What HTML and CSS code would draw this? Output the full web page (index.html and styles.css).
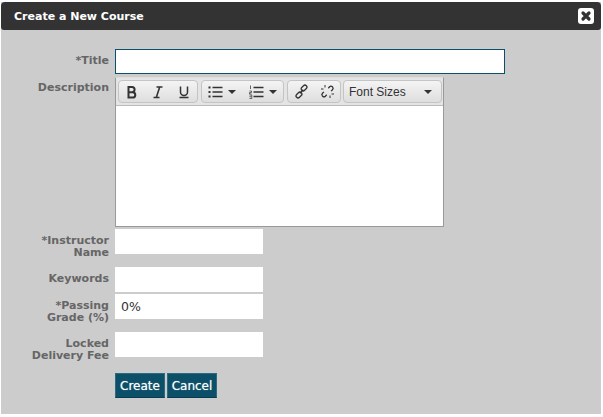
FILE: index.html
```html
<!DOCTYPE html>
<html lang="en">
<head>
<meta charset="utf-8">
<title>Create a New Course</title>
<link rel="stylesheet" href="styles.css">
</head>
<body>
<div class="dialog">
  <header class="titlebar">
    <span class="title">Create a New Course</span>
    <button class="close" aria-label="Close">
      <svg width="16" height="16" viewBox="0 0 16 16"><rect width="16" height="16" rx="3" fill="#fff"/><path d="M5 5l6 6M11 5l-6 6" stroke="#333" stroke-width="3.200" stroke-linecap="round"/></svg>
    </button>
  </header>
  <form class="form">
    <div class="row row-title">
      <label class="label">*Title</label>
      <input class="input input-wide" type="text">
    </div>
    <div class="row row-desc">
      <label class="label label-desc">Description</label>
      <div class="editor">
        <div class="toolbar">
          <div class="group">
            <span class="tool"><svg width="12" height="14" viewBox="0 0 12 14"><path d="M2.500 2h3.500a2.600 2.600 0 0 1 0 5.200h-3.500zM2.500 7.200h4.100a2.700 2.700 0 0 1 0 5.400h-4.100z" fill="none" stroke="#333" stroke-width="2"/></svg></span>
            <span class="tool"><svg width="12" height="14" viewBox="0 0 12 14"><path d="M4.500 2h6M1.500 12.500h6M7.700 2L4.300 12.500" fill="none" stroke="#333" stroke-width="1.600"/></svg></span>
            <span class="tool"><svg width="12" height="14" viewBox="0 0 12 14"><path d="M2.500 1.500v5.500a3.500 3.500 0 0 0 7 0V1.500M1.500 12.500h9" fill="none" stroke="#333" stroke-width="1.500"/></svg></span>
          </div>
          <div class="group">
            <span class="tool tool-list"><svg width="15" height="14" viewBox="0 0 15 14"><path d="M4.500 2.500h10M4.500 7h10M4.500 11.500h10" stroke="#333" stroke-width="1.400"/><path d="M0.500 2.500h2M0.500 7h2M0.500 11.500h2" stroke="#333" stroke-width="2"/></svg><i class="caret"></i></span>
            <span class="tool tool-list"><svg width="15" height="14" viewBox="0 0 15 14"><path d="M4.500 2.500h10M4.500 7h10M4.500 11.500h10" stroke="#333" stroke-width="1.400"/><path d="M1.500 0.500v3.500M0.500 6h2v1.500h-2v1.500h2M0.500 10h2.300v3.500h-2.300M0.500 11.700h2" fill="none" stroke="#444" stroke-width="0.800"/></svg><i class="caret"></i></span>
          </div>
          <div class="group">
            <span class="tool"><svg width="15" height="15" viewBox="0 0 15 15"><g fill="none" stroke="#333" stroke-width="1.300"><rect x="6.800" y="2" width="6.500" height="4" rx="2" transform="rotate(-45 10 4)"/><rect x="1.700" y="9" width="6.500" height="4" rx="2" transform="rotate(-45 5 11)"/><path d="M5.800 9.200l3.400-3.400"/></g></svg></span>
            <span class="tool"><svg width="15" height="15" viewBox="0 0 15 15"><g fill="none" stroke="#333" stroke-width="1.300"><path d="M8.300 4.200l1.300-1.400a2 2 0 0 1 2.800 0l0.100 0.100a2 2 0 0 1 0 2.800l-1.400 1.400"/><path d="M6.700 10.800l-1.300 1.400a2 2 0 0 1-2.800 0l-0.100-0.100a2 2 0 0 1 0-2.800l1.400-1.400"/></g><path d="M5 1v2.500M1 5h2.500M10 11.500v2.500M11.500 10h2.500" stroke="#333" stroke-width="1"/></svg></span>
          </div>
          <div class="group group-select">
            <span class="select">Font Sizes</span><i class="caret"></i>
          </div>
        </div>
        <div class="editarea"></div>
      </div>
    </div>
    <div class="row row-two">
      <label class="label">*Instructor Name</label>
      <input class="input" type="text">
    </div>
    <div class="row row-one">
      <label class="label">Keywords</label>
      <input class="input" type="text">
    </div>
    <div class="row row-two">
      <label class="label">*Passing Grade (%)</label>
      <input class="input" type="text" value="0%">
    </div>
    <div class="row row-last">
      <label class="label">Locked Delivery Fee</label>
      <input class="input" type="text">
    </div>
    <div class="actions">
      <button class="btn" type="button">Create</button>
      <button class="btn" type="button">Cancel</button>
    </div>
  </form>
</div>
</body>
</html>
```

FILE: styles.css
```css
* { box-sizing: border-box; }
html, body { margin: 0; background: #fff; }
body { padding: 2px 2px 3px 1px; height: 417px; overflow: hidden; }
.dialog {
  width: 600px;
  height: 412px;
  background: #cccccc;
  font-family: "DejaVu Sans", sans-serif;
}
.titlebar {
  height: 28px;
  background: #333333;
  border-radius: 4px 4px 3px 3px;
  display: flex;
  align-items: center;
  justify-content: space-between;
  padding: 0 7px 0 13px;
}
.title { color: #fff; font-size: 11px; font-weight: bold; }
.close { border: 0; padding: 0; background: none; display: flex; }
.form { padding-top: 19px; }
.row { display: flex; align-items: flex-start; }
.label {
  width: 108px;
  margin-right: 6px;
  flex: none;
  padding: 6px 0 0 28px;
  text-align: right;
  color: #666666;
  font-size: 11px;
  font-weight: bold;
  line-height: 12px;
}
.label-desc { padding: 5px 0 0; }
.input {
  width: 148px;
  height: 25px;
  border: 1px solid #fff;
  background: #fff;
  padding: 0 5px;
  font-family: "DejaVu Sans", sans-serif;
  font-size: 12.500px;
  color: #333;
  outline: none;
  border-radius: 0;
}
.input-wide { width: 390px; border-color: #0b4f6c; }
.row-title { height: 28px; }
.row-desc { height: 152px; }
.row-two { height: 38px; }
.row-one { height: 27px; }
.row-last { height: 41px; }
.editor {
  width: 329px;
  height: 150px;
  border: 1px solid #999;
  border-top-color: #ddd;
  background: #fff;
  display: flex;
  flex-direction: column;
}
.toolbar {
  height: 28px;
  flex: none;
  background: #e4e4e4;
  border-bottom: 1px solid #bbb;
  display: flex;
  gap: 3px;
  padding: 2px 0 0 2px;
}
.group {
  height: 23px;
  display: flex;
  align-items: center;
  border: 1px solid #c4c4c4;
  border-radius: 4px;
  background: linear-gradient(#f4f4f4, #dedede);
}
.tool {
  width: 26px;
  height: 100%;
  display: flex;
  align-items: center;
  justify-content: center;
}
.tool-list { width: 40.500px; gap: 5px; }
.caret {
  width: 0;
  height: 0;
  flex: none;
  border-left: 4px solid transparent;
  border-right: 4px solid transparent;
  border-top: 4px solid #333;
}
.group-select { width: 99px; margin-left: -1px; padding: 0 9px 0 5px; justify-content: space-between; }
.select {
  font-family: "Liberation Sans", sans-serif;
  font-size: 12px;
  color: #333;
}
.editarea { flex: 1; background: #fff; }
.actions { display: flex; gap: 2px; padding-left: 114px; }
.btn {
  width: 50px;
  height: 25px;
  padding: 0;
  background: #0b5068;
  border: 1px solid #2d6a80;
  border-bottom-color: #083c4e;
  color: #fff;
  font-family: "DejaVu Sans", sans-serif;
  font-size: 12px;
  text-shadow: 0 0 1px rgba(255, 255, 255, 0.6);
  border-radius: 0;
}
```
